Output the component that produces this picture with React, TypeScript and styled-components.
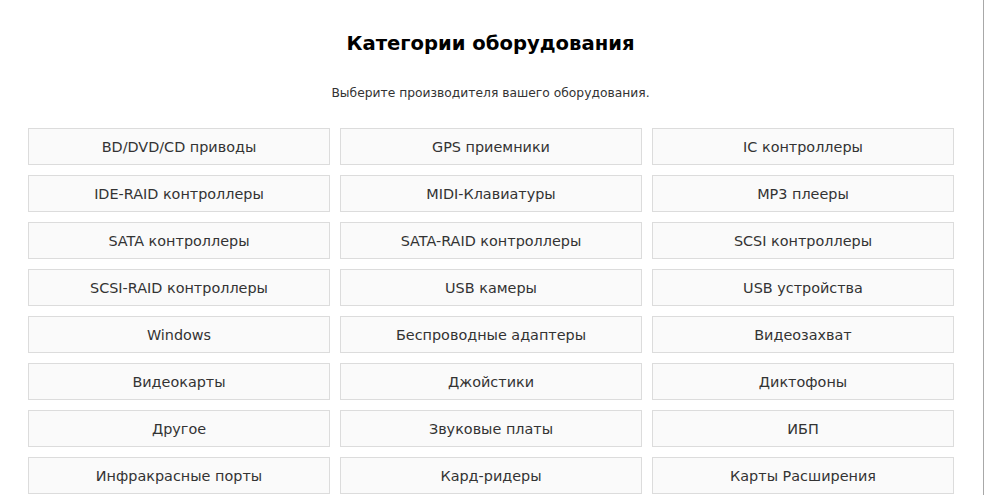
import React from 'react';
import styled, { createGlobalStyle } from 'styled-components';

const GlobalStyle = createGlobalStyle`
  html, body {
    margin: 0;
    padding: 0;
    background: #fff;
  }
  body {
    font-family: "DejaVu Sans", Tahoma, sans-serif;
    color: #333;
  }
`;

const Page = styled.div`
  box-sizing: border-box;
  width: 984px;
  height: 495px;
  border-right: 1px solid #a8a8a8;
  overflow: hidden;
`;

const Section = styled.section`
  padding: 0 30px 0 28px;
`;

const Title = styled.h1`
  margin: 0;
  padding-top: 30px;
  height: 58px;
  box-sizing: border-box;
  text-align: center;
  font-size: 19.6px;
  font-weight: bold;
  color: #000;
  line-height: 28px;
`;

const Subtitle = styled.p`
  margin: 0;
  padding-top: 27px;
  height: 70px;
  box-sizing: border-box;
  text-align: center;
  font-size: 12.3px;
  color: #333;
  line-height: 16px;
`;

const Grid = styled.div`
  display: grid;
  grid-template-columns: repeat(3, 302px);
  grid-auto-rows: 37px;
  column-gap: 10px;
  row-gap: 10px;
`;

const Item = styled.a`
  display: flex;
  align-items: center;
  justify-content: center;
  box-sizing: border-box;
  background: #fafafa;
  border: 1px solid #dcdcdc;
  font-size: 14.4px;
  color: #333;
  text-decoration: none;
  cursor: pointer;
  &:hover {
    background: #f0f0f0;
  }
`;

const categories = [
  'BD/DVD/CD приводы',
  'GPS приемники',
  'IC контроллеры',
  'IDE-RAID контроллеры',
  'MIDI-Клавиатуры',
  'MP3 плееры',
  'SATA контроллеры',
  'SATA-RAID контроллеры',
  'SCSI контроллеры',
  'SCSI-RAID контроллеры',
  'USB камеры',
  'USB устройства',
  'Windows',
  'Беспроводные адаптеры',
  'Видеозахват',
  'Видеокарты',
  'Джойстики',
  'Диктофоны',
  'Другое',
  'Звуковые платы',
  'ИБП',
  'Инфракрасные порты',
  'Кард-ридеры',
  'Карты Расширения',
];

const App = () => {
  return (
    <Page>
      <GlobalStyle />
      <Section>
        <Title>Категории оборудования</Title>
        <Subtitle>Выберите производителя вашего оборудования.</Subtitle>
        <Grid>
          {categories.map(name => (
            <Item key={name}>{name}</Item>
          ))}
        </Grid>
      </Section>
    </Page>
  );
};

export default App;
